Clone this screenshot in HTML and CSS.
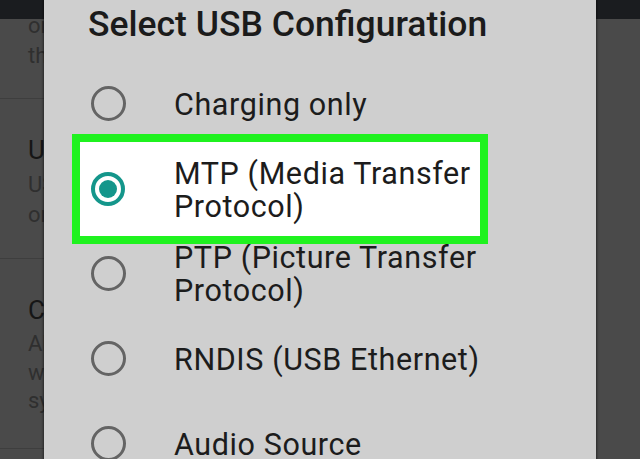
FILE: index.html
```html
<!DOCTYPE html>
<html lang="en">
<head>
<meta charset="utf-8">
<title>Select USB Configuration</title>
<link rel="stylesheet" href="styles.css">
</head>
<body>
<div class="screen">
  <div class="statusbar"></div>
  <div class="list">
    <div class="item item-tail">
      <p class="sub">on the screen overlay</p>
      <p class="sub">that shows touches</p>
    </div>
    <div class="item item-mid">
      <p class="title">USB debugging</p>
      <p class="sub">USB debugging mode</p>
      <p class="sub">on connection</p>
    </div>
    <div class="item item-big">
      <p class="title">Check apps</p>
      <p class="sub">Allow checks</p>
      <p class="sub">with the</p>
      <p class="sub">system security</p>
    </div>
    <div class="item"></div>
  </div>
  <div class="dialog">
    <h1 class="dialog-title">Select USB Configuration</h1>
    <ul class="options">
      <li class="option"><span class="radio"></span><span class="label">Charging only</span></li>
      <li class="option option-selected"><span class="radio radio-on"></span><span class="label">MTP (Media Transfer Protocol)</span></li>
      <li class="option"><span class="radio"></span><span class="label">PTP (Picture Transfer Protocol)</span></li>
      <li class="option"><span class="radio"></span><span class="label">RNDIS (USB Ethernet)</span></li>
      <li class="option"><span class="radio"></span><span class="label">Audio Source</span></li>
    </ul>
  </div>
</div>
</body>
</html>
```
FILE: styles.css
```css
html, body {
  margin: 0;
  padding: 0;
}
body {
  width: 640px;
  height: 459px;
  overflow: hidden;
  background: #4a4a4a;
  font-family: Roboto, "Liberation Sans", sans-serif;
}
.screen {
  position: relative;
  width: 640px;
  height: 459px;
  overflow: hidden;
  background: #4a4a4a;
}
.statusbar {
  height: 19px;
  background: #1a1c1f;
}
.list {
  width: 520px;
  overflow: hidden;
}
.item {
  box-sizing: border-box;
  border-bottom: 1px solid #3e3e3e;
  padding: 35px 0 0 28px;
  display: flex;
  flex-direction: column;
  white-space: nowrap;
  overflow: hidden;
}
.item-tail {
  height: 80px;
  padding-top: 0;
  padding-bottom: 27px;
  justify-content: flex-end;
}
.item-mid {
  height: 160px;
}
.item-big {
  height: 190px;
}
.item p {
  margin: 0;
}
.title {
  font-size: 26px;
  line-height: 32px;
  color: #161616;
  margin-bottom: 4px !important;
}
.sub {
  font-size: 22px;
  line-height: 30px;
  color: #2f2f2f;
}
.item-big .sub {
  line-height: 28.5px;
}
.dialog {
  position: absolute;
  left: 44px;
  top: 0;
  width: 552px;
  height: 470px;
  box-sizing: border-box;
  padding: 3px 0 0 44px;
  background: #cfcfcf;
  box-shadow: 0 0 2px 1px rgba(0, 0, 0, 0.45);
}
.dialog-title {
  margin: 0;
  font-size: 35.5px;
  line-height: 43px;
  font-weight: 500;
  color: #1b1b1b;
  white-space: nowrap;
}
.options {
  list-style: none;
  margin: 14.5px 0 0;
  padding: 0;
}
.option {
  display: flex;
  align-items: center;
  height: 85px;
}
.radio {
  flex: none;
  box-sizing: border-box;
  width: 35px;
  height: 35px;
  margin-left: 3px;
  border: 3px solid #646464;
  border-radius: 50%;
  display: flex;
  align-items: center;
  justify-content: center;
}
.radio-on {
  width: 34px;
  height: 34px;
  border: 4px solid #14968b;
}
.radio-on::after {
  content: "";
  width: 18px;
  height: 18px;
  border-radius: 50%;
  background: #14968b;
}
.label {
  margin-left: 48px;
  max-width: 312px;
  font-size: 30.5px;
  letter-spacing: 0.6px;
  line-height: 33px;
  color: #1c1c1c;
  padding-top: 2px;
}
.option-selected {
  position: relative;
  z-index: 1;
  box-sizing: border-box;
  width: 416px;
  height: 110px;
  margin: -12px 0 -13px -16px;
  padding-left: 8px;
  border: 8px solid #1ff21f;
  background: #ffffff;
}
.option-selected .label {
  margin-left: 49px;
}
```
